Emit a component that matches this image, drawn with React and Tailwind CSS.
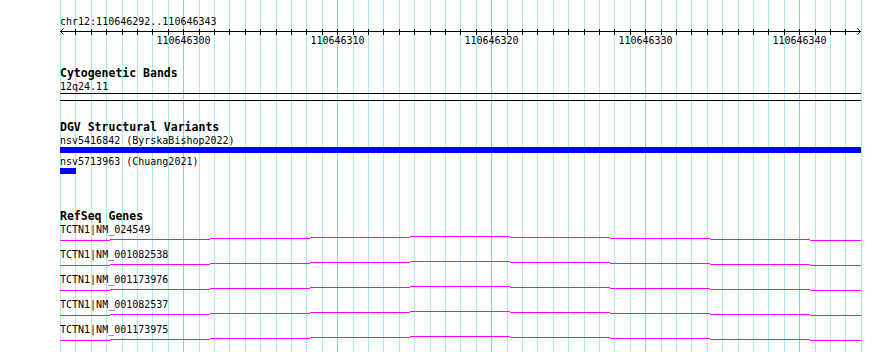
const LEFT = 60;
const SCALE = 15.4;
const START = 110646292;
const px = (i) => Math.round(LEFT + i * SCALE);

const genes = [
  "TCTN1|NM_024549",
  "TCTN1|NM_001082538",
  "TCTN1|NM_001173976",
  "TCTN1|NM_001082537",
  "TCTN1|NM_001173975",
];

// intron connector: a very flat hat, steps of 1px every 100px
const HAT = [
  [60, 110, 4],
  [110, 210, 3],
  [210, 310, 2],
  [310, 410, 1],
  [410, 510, 0],
  [510, 610, 1],
  [610, 710, 2],
  [710, 810, 3],
  [810, 861, 4],
];

function Grid() {
  const lines = [];
  for (let i = 0; i <= 52; i++) {
    const major = (i - 8) % 10 === 0;
    lines.push(
      <rect key={i} x={px(i)} y={0} width={1} height={352} fill={major ? "#8cc9ec" : "#a8ecf0"} />
    );
  }
  return (
    <svg className="absolute inset-0" width={890} height={352} shapeRendering="crispEdges">
      {lines}
    </svg>
  );
}

function Ruler() {
  const ticks = [];
  for (let i = 1; i <= 51; i++) {
    ticks.push(<rect key={i} x={px(i)} y={1} width={1} height={6} fill="#000" />);
  }
  return (
    <svg width={890} height={20} className="block">
      <g shapeRendering="crispEdges">
        <rect x={60} y={3} width={801} height={1} fill="#000" />
        {ticks}
      </g>
      <polyline points="63.5,0.5 60.5,3.5 63.5,6.5" stroke="#000" strokeWidth={1} fill="none" />
      <polyline points="857.5,0.5 860.5,3.5 857.5,6.5" stroke="#000" strokeWidth={1} fill="none" />
      {[8, 18, 28, 38, 48].map((i) => (
        <text key={i} x={px(i) + 0.5} y={16} textAnchor="middle" fontSize={10} fill="#000">
          {START + i}
        </text>
      ))}
    </svg>
  );
}

function GeneLine() {
  return (
    <svg width={890} height={12} className="block" shapeRendering="crispEdges">
      {HAT.map(([a, b, y]) => (
        <rect key={a} x={a} y={y} width={b - a} height={1} fill="#ff00ff" />
      ))}
    </svg>
  );
}

function Title({ children }) {
  return <div className="pl-[60px] h-[13px] leading-[13px] text-[11.5px] font-bold">{children}</div>;
}

function Label({ children }) {
  return <div className="pl-[60px] h-[13px] leading-[13px] text-[10px] whitespace-nowrap">{children}</div>;
}

export default function App() {
  return (
    <div className="relative w-[890px] h-[352px] overflow-hidden bg-white text-black font-['DejaVu_Sans_Mono','Liberation_Mono',monospace]">
      <Grid />
      <div className="relative flex flex-col">
        <div className="pt-[15px]">
          <Label>chr12:110646292..110646343</Label>
        </div>
        <Ruler />

        <div className="mt-[19px]">
          <Title>Cytogenetic Bands</Title>
          <Label>12q24.11</Label>
          <div className="ml-[60px] w-[801px] h-px bg-black" />
          <div className="ml-[60px] w-[801px] h-px bg-black mt-[6px]" />
        </div>

        <div className="mt-[20px]">
          <Title>DGV Structural Variants</Title>
          <Label>nsv5416842 (ByrskaBishop2022)</Label>
          <div className="ml-[60px] w-[801px] h-[6px] bg-[#0000ff]" />
          <div className="mt-[2px]">
            <Label>nsv5713963 (Chuang2021)</Label>
          </div>
          <div className="ml-[60px] w-[16px] h-[6px] bg-[#0000ff]" />
        </div>

        <div className="mt-[36px]">
          <Title>RefSeq Genes</Title>
          {genes.map((g) => (
            <div key={g}>
              <Label>{g}</Label>
              <GeneLine />
            </div>
          ))}
        </div>
      </div>
    </div>
  );
}
